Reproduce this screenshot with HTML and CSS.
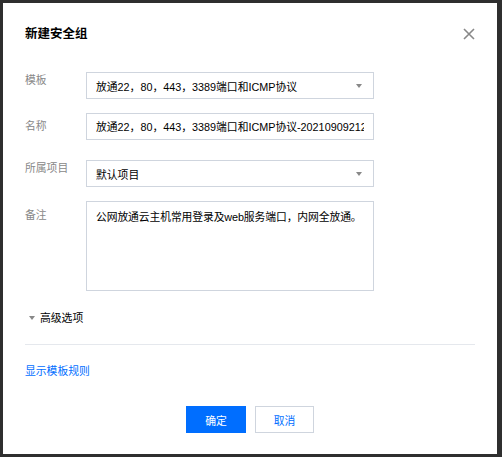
FILE: index.html
```html
<!DOCTYPE html>
<html lang="zh-CN">
<head>
<meta charset="utf-8">
<link rel="stylesheet" href="styles.css">
</head>
<body>
<div class="dialog">
  <div class="header">
    <div class="title">新建安全组</div>
    <button class="close" aria-label="关闭">
      <svg width="12" height="12" viewBox="0 0 12 12"><path d="M1 1L11 11M11 1L1 11" stroke="#888" stroke-width="1.6" fill="none"/></svg>
    </button>
  </div>
  <div class="form">
    <div class="row r1">
      <div class="label">模板</div>
      <div class="control select"><div class="text">放通22，80，443，3389端口和ICMP协议</div><span class="caret"></span></div>
    </div>
    <div class="row r2">
      <div class="label">名称</div>
      <div class="control"><div class="text">放通22，80，443，3389端口和ICMP协议-20210909212</div></div>
    </div>
    <div class="row r3">
      <div class="label">所属项目</div>
      <div class="control select"><div class="text">默认项目</div><span class="caret"></span></div>
    </div>
    <div class="row r4">
      <div class="label">备注</div>
      <div class="control textarea"><div class="text">公网放通云主机常用登录及web服务端口，内网全放通。</div></div>
    </div>
  </div>
  <div class="advanced"><span class="caret small"></span>高级选项</div>
  <div class="divider"></div>
  <a class="link">显示模板规则</a>
  <div class="footer">
    <button class="btn primary">确定</button>
    <button class="btn">取消</button>
  </div>
</div>
</body>
</html>
```

FILE: styles.css
```css
html, body {
  margin: 0;
  padding: 0;
  background: #2f2f2f;
  width: 502px;
  height: 457px;
  overflow: hidden;
}
body {
  padding: 3px 5px 3px 3px;
  box-sizing: border-box;
  font-family: "Liberation Sans", "Noto Sans CJK SC", sans-serif;
  font-size: 10.8px;
  color: #000;
}
.dialog {
  background: #fff;
  width: 494px;
  height: 451px;
  box-sizing: border-box;
  padding: 21px 22px 21px 22px;
  display: flex;
  flex-direction: column;
}
.header {
  position: relative;
  height: 20px;
}
.title {
  font-size: 12.5px;
  font-weight: bold;
  line-height: 20px;
  color: #000;
}
.close {
  position: absolute;
  right: 0;
  top: 4px;
  width: 12px;
  height: 12px;
  padding: 0;
  border: 0;
  background: none;
  display: flex;
}
.form {
  margin-top: 28px;
  display: flex;
  flex-direction: column;
}
.row {
  display: flex;
  align-items: flex-start;
}
.r2 { margin-top: 14px; }
.r3 { margin-top: 20px; }
.r4 { margin-top: 14px; }
.label {
  width: 61px;
  flex: none;
  color: #888;
  line-height: 18px;
}
.r1 .label, .r3 .label { margin-top: -1px; }
.r2 .label { margin-top: 4px; }
.r4 .label { margin-top: 5px; }
.control {
  width: 288px;
  height: 27px;
  box-sizing: border-box;
  border: 1px solid #cfd5de;
  padding: 0 9px;
  display: flex;
  align-items: center;
  position: relative;
}
.control .text {
  flex: 1;
  min-width: 0;
  white-space: nowrap;
  overflow: hidden;
  line-height: 18px;
  margin-top: 1px;
}
.select .text { margin-top: 2px; }
.textarea {
  height: 90px;
  align-items: flex-start;
  padding: 5px 3px 0 9px;
}
.textarea .text {
  overflow: visible;
  letter-spacing: -0.1px;
}
.caret {
  width: 0;
  height: 0;
  border-left: 3.5px solid transparent;
  border-right: 3.5px solid transparent;
  border-top: 4px solid #888;
  margin-left: 8px;
  margin-right: 2px;
}
.advanced {
  margin-top: 18px;
  line-height: 18px;
  display: flex;
  align-items: center;
  color: #000;
  padding-left: 4px;
}
.caret.small {
  margin: 0 5px 0 0;
}
.divider {
  margin-top: 17px;
  height: 1px;
  background: #e5e8ed;
}
.link {
  margin-top: 17px;
  line-height: 18px;
  color: #006eff;
  align-self: flex-start;
}
.footer {
  margin-top: 26px;
  display: flex;
  justify-content: center;
  gap: 9px;
}
.btn {
  height: 27px;
  width: 59px;
  box-sizing: border-box;
  border: 1px solid #cfd5de;
  background: #fff;
  color: #006eff;
  font-family: inherit;
  font-size: 10.8px;
  padding: 0;
}
.btn.primary {
  width: 60px;
  background: #006eff;
  border-color: #006eff;
  color: #fff;
}
```
